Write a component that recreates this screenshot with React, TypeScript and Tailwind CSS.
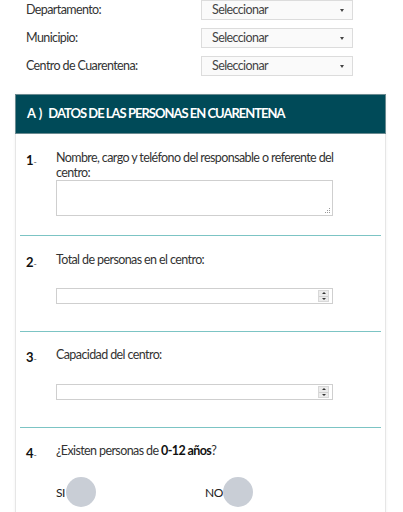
import React from "react";

const font = { fontFamily: "Lato, 'Liberation Sans', sans-serif" };

function SelectRow({ label }: { label: string }) {
  return (
    <div className="flex h-[28px] items-center">
      <div className="w-[201px] pl-[26px] text-[12.5px] tracking-[-0.6px] text-[#333]">{label}</div>
      <div className="relative flex h-[20px] w-[152px] items-center border border-[#dcdcdc] bg-[#fafafa] pl-[10px] text-[12.5px] tracking-[-0.6px] text-[#444]">
        Seleccionar
        <span className="absolute right-[8px] top-[8px] h-0 w-0 border-x-[2.5px] border-t-[3px] border-x-transparent border-t-[#444]" />
      </div>
    </div>
  );
}

function Num({ n }: { n: string }) {
  return (
    <div className="w-[40px] shrink-0 pl-[10px] pt-[3px] text-[13px] leading-[15px]">
      <span className="font-bold text-[#111]">{n}</span>
      <span className="text-[9px] text-[#666]">-</span>
    </div>
  );
}

function NumberInput() {
  return (
    <div className="relative h-[16px] w-[277px] border border-[#cfcfcf] bg-white">
      <div className="absolute right-[3px] top-[1px] flex h-[12px] w-[11px] flex-col border border-[#d8d8d8] bg-[#ececec]">
        <div className="flex flex-1 items-center justify-center border-b border-[#d0d0d0]">
          <span className="h-0 w-0 border-x-[2px] border-b-[2px] border-x-transparent border-b-[#333]" />
        </div>
        <div className="flex flex-1 items-center justify-center">
          <span className="h-0 w-0 border-x-[2px] border-t-[2px] border-x-transparent border-t-[#333]" />
        </div>
      </div>
    </div>
  );
}

function Divider() {
  return <div className="mx-[4px] h-px bg-[#7cc4c4]" />;
}

export default function App() {
  return (
    <div className="h-[512px] w-[403px] overflow-hidden bg-white" style={font}>
      <div className="mt-[-4px]">
        <SelectRow label="Departamento:" />
        <SelectRow label="Municipio:" />
        <SelectRow label="Centro de Cuarentena:" />
      </div>

      <div className="mx-[15px] mt-[14px] w-[371px] border-x border-[#e6e6e6] shadow-[0_0_3px_rgba(0,0,0,0.06)]">
        <div className="-mx-px flex h-[40px] items-center border border-[#6a8a90] bg-[#004a58] pl-[11px] text-[13px] font-bold tracking-[-1px] text-white">
          <span className="tracking-[0px]">A )</span>
          <span className="ml-[6px]">DATOS DE LAS PERSONAS EN CUARENTENA</span>
        </div>

        <div className="flex pb-[19px] pt-[16px]">
          <Num n="1" />
          <div className="w-[300px] text-[12.5px] leading-[15px] tracking-[-0.6px] text-[#333]">
            <p>Nombre, cargo y teléfono del responsable o referente del</p>
            <p>centro:</p>
            <div className="relative h-[36px] w-[277px]">
              <textarea className="block h-[36px] w-[277px] resize-none border border-[#cfcfcf] bg-white" />
              <div className="absolute bottom-[3px] right-[3px] grid grid-cols-3 gap-px">
                <span className="h-px w-px" />
                <span className="h-px w-px" />
                <span className="h-px w-px bg-[#999]" />
                <span className="h-px w-px" />
                <span className="h-px w-px bg-[#999]" />
                <span className="h-px w-px bg-[#999]" />
                <span className="h-px w-px bg-[#999]" />
                <span className="h-px w-px bg-[#999]" />
                <span className="h-px w-px bg-[#999]" />
              </div>
            </div>
          </div>
        </div>
        <Divider />

        <div className="flex pb-[27px] pt-[16px]">
          <Num n="2" />
          <div className="text-[12.5px] leading-[15px] tracking-[-0.6px] text-[#333]">
            <p>Total de personas en el centro:</p>
            <div className="mt-[21px]">
              <NumberInput />
            </div>
          </div>
        </div>
        <Divider />

        <div className="flex pb-[27px] pt-[15px]">
          <Num n="3" />
          <div className="text-[12.5px] leading-[15px] tracking-[-0.6px] text-[#333]">
            <p>Capacidad del centro:</p>
            <div className="mt-[22px]">
              <NumberInput />
            </div>
          </div>
        </div>
        <Divider />

        <div className="flex pb-[20px] pt-[15px]">
          <Num n="4" />
          <div className="text-[12.5px] leading-[15px] tracking-[-0.6px] text-[#333]">
            <p>
              ¿Existen personas de <b className="text-[#111]">0-12 años</b>?
            </p>
            <div className="mt-[19px] flex items-center text-[12px] tracking-[-0.4px] text-[#222]">
              <span>SI</span>
              <span className="ml-px h-[30px] w-[30px] rounded-full bg-[#c9ced6]" />
              <span className="ml-[109px]">NO</span>
              <span className="h-[30px] w-[30px] rounded-full bg-[#c9ced6]" />
            </div>
          </div>
        </div>
      </div>
    </div>
  );
}
